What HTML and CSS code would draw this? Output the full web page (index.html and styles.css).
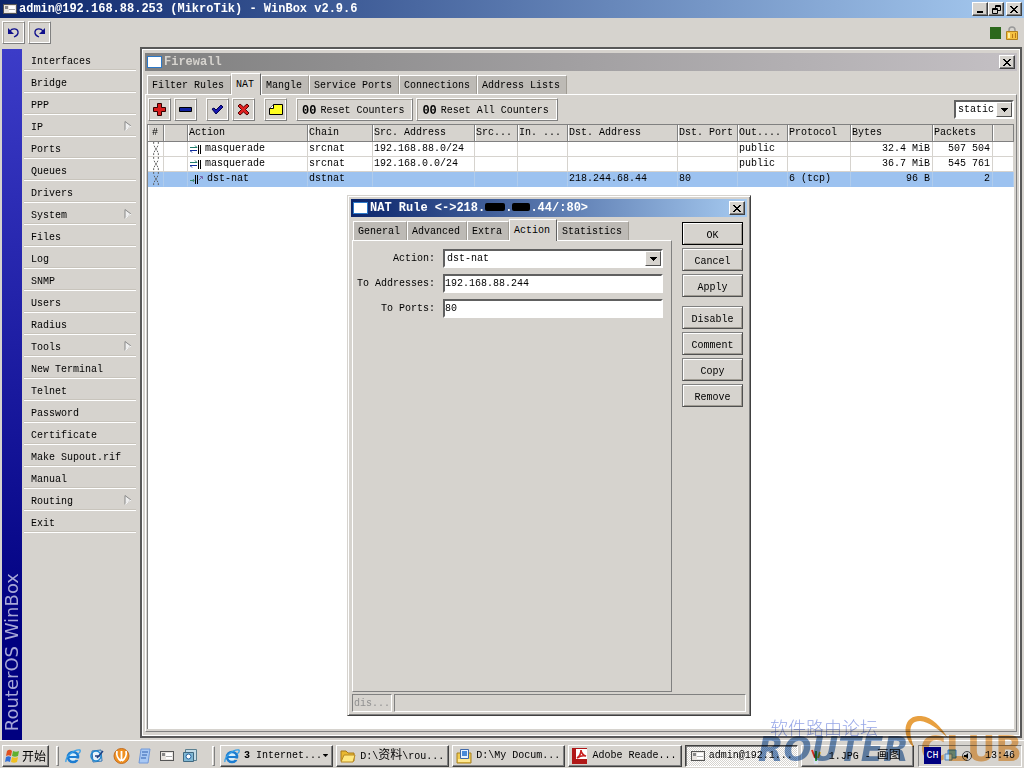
FILE: index.html
```html
<!DOCTYPE html>
<html lang="en">
<head>
<meta charset="utf-8">
<title>admin@192.168.88.253 (MikroTik) - WinBox v2.9.6</title>
<link rel="stylesheet" href="styles.css">
</head>
<body>
<svg class="defs" aria-hidden="true">
  <symbol id="close" viewBox="0 0 8 7"><path d="M0 0h2v1h1v1h2v-1h1v-1h2v1h-1v1h-1v1h-1v1h1v1h1v1h1v1h-2v-1h-1v-1h-2v1h-1v1h-2v-1h1v-1h1v-1h1v-1h-1v-1h-1v-1h-1z"/></symbol>
  <symbol id="down" viewBox="0 0 7 4"><path d="M0 0h7v1h-1v1h-1v1h-1v1h-1v-1h-1v-1h-1v-1h-1z"/></symbol>
  <symbol id="app" viewBox="0 0 14 10"><path fill="#555" d="M0 0h14v10H0z"/><path fill="#e8e4e0" d="M1 1h12v8H1z"/><path fill="#888" d="M2 2h3v3H2z"/><path fill="#fff" d="M6 2h6v6H6z"/><path fill="#aaa" d="M6 5h6v1H6z"/></symbol>
  <symbol id="win" viewBox="0 0 15 12"><path fill="#2b78c8" d="M0 0h15v12H0z"/><path fill="#fff" d="M1 1h13v10H1z"/></symbol>
  <symbol id="sub" viewBox="0 0 8 10"><path fill="#eee" stroke="#888" d="M1 .5v9L7 5z"/><path stroke="#fff" fill="none" d="M1 9.5L7 5"/></symbol>
  <symbol id="off" viewBox="0 0 8 15"><path fill="none" stroke="#555" d="M1.500 0v3M6.500 0v3M1.500 12v3M6.500 12v3M2 4l1 2 2 3 1 2M6 4l-1 2-2 3-1 2" stroke-dasharray="2 1"/></symbol>
  <symbol id="masq" viewBox="0 0 12 10"><path stroke="#207c6c" fill="none" d="M0 3.500h7M5 1.500l2 2"/><path stroke="#102c9c" fill="none" d="M0 6.500h7M2 8.500l-2-2"/><path d="M8 1h1v9H8zM10 1h1v9h-1z"/></symbol>
  <symbol id="dst" viewBox="0 0 14 10"><path stroke="#3c8c6c" fill="none" d="M0 6.500h4M3 5l1 1.500L3 8"/><path d="M5 1h1v9H5zM7 1h1v9H7z"/><path stroke="#76a" fill="none" d="M9 6l3-3M10 2.500h2.500V5"/></symbol>
  <symbol id="ie" viewBox="0 0 16 16"><circle cx="8" cy="9" r="5" fill="#d8f0fc" stroke="#1c7cd0" stroke-width="2.600"/><path fill="#1c7cd0" d="M4 8h9v2H4z"/><path fill="#d4d0c8" d="M10 10.500h5v1.500h-5z"/><path d="M1 14C0 9 9 1 15 2c1 2-2 4-2 4" fill="none" stroke="#36a0e8" stroke-width="1.300"/></symbol>
</svg>
<div class="screen">
  <header class="title active">
    <svg class="ic14"><use href="#app"/></svg>
    <h1>admin@192.168.88.253 (MikroTik) - WinBox v2.9.6</h1>
    <div class="winbtns">
      <button class="cap" aria-label="Minimize"><svg width="8" height="7"><path d="M1 5h6v2H1z"/></svg></button>
      <button class="cap" aria-label="Restore"><svg width="9" height="9"><path fill="none" stroke="#000" d="M3.500 3V.5h5v5H6M3 1.500h6M.5 3.500h5v5h-5zM0 4.500h6"/></svg></button>
      <button class="cap gap" aria-label="Close"><svg width="8" height="7"><use href="#close"/></svg></button>
    </div>
  </header>
  <div class="mainbar">
    <button class="tool" aria-label="Undo"><svg width="13" height="11" viewBox="0 0 13 11"><path fill="none" stroke="#10108c" stroke-width="1.300" d="M3 4C5 1 10 1 11 4.500c.5 3-1.500 4.500-4 5.500"/><path fill="#10108c" d="M1 1v6h6z"/></svg></button>
    <button class="tool" aria-label="Redo"><svg width="13" height="11" viewBox="0 0 13 11"><path fill="none" stroke="#10108c" stroke-width="1.300" d="M10 4C8 1 3 1 2 4.500c-.5 3 1.500 4.500 4 5.500"/><path fill="#10108c" d="M12 1v6H6z"/></svg></button>
    <div class="status">
      <span class="led"></span>
      <svg width="12" height="14" viewBox="0 0 12 14"><path fill="none" stroke="#999" stroke-width="1.500" d="M3 6V4c0-4 6-4 6 0v2"/><path fill="#f4c040" stroke="#b08020" d="M.5 5.500h11v8H.5z"/><path fill="#fff0a0" d="M2 7h2v5H2z"/><path fill="#b87818" d="M6 8h1v4H6zM9 7h1v5H9z"/></svg>
    </div>
  </div>
  <div class="work">
    <aside class="brand"><span>RouterOS WinBox</span></aside>
    <nav class="menu">
      <button>Interfaces</button><button>Bridge</button><button>PPP</button>
      <button>IP<svg class="arrow"><use href="#sub"/></svg></button>
      <button>Ports</button><button>Queues</button><button>Drivers</button>
      <button>System<svg class="arrow"><use href="#sub"/></svg></button>
      <button>Files</button><button>Log</button><button>SNMP</button><button>Users</button><button>Radius</button>
      <button>Tools<svg class="arrow"><use href="#sub"/></svg></button>
      <button>New Terminal</button><button>Telnet</button><button>Password</button><button>Certificate</button>
      <button>Make Supout.rif</button><button>Manual</button>
      <button>Routing<svg class="arrow"><use href="#sub"/></svg></button>
      <button>Exit</button>
    </nav>
    <main class="desktop">
      <section class="firewall">
        <div class="title">
          <svg class="ic15"><use href="#win"/></svg><h2>Firewall</h2>
          <div class="winbtns"><button class="cap" aria-label="Close"><svg width="8" height="7"><use href="#close"/></svg></button></div>
        </div>
        <div class="tabs">
          <button>Filter Rules</button><button class="on">NAT</button><button>Mangle</button><button>Service Ports</button><button>Connections</button><button>Address Lists</button>
        </div>
        <div class="pane">
          <div class="actions">
            <button class="tool" aria-label="Add"><svg width="13" height="13"><path fill="#d81c1c" stroke="#300" d="M4.500.5h4v4h4v4h-4v4h-4v-4h-4v-4h4z"/></svg></button>
            <button class="tool" aria-label="Remove"><svg width="13" height="13"><path fill="#1020a0" stroke="#000" d="M.5 4.500h12v4H.5z"/></svg></button>
            <button class="tool gap" aria-label="Enable"><svg width="13" height="13"><path fill="#1818b0" stroke="#000050" d="M1 6l2-1 2 2 5-5 2 2-7 7z"/></svg></button>
            <button class="tool" aria-label="Disable"><svg width="13" height="13"><path fill="#e02020" stroke="#500" d="M1 3l2-2 3.500 3L10 1l2 2-3.500 3.500L12 10l-2 2-3.500-3L3 12l-2-2 3.500-3.500z"/></svg></button>
            <button class="tool gap" aria-label="Comment"><svg width="14" height="12"><path fill="#ffff20" stroke="#000" d="M.5 10.500v-6l4-4h9v10z"/><path fill="#fff" stroke="#000" d="M.5 4.500h4v-4"/></svg></button>
            <button class="tool wide gap"><b>00</b>Reset Counters</button>
            <button class="tool wide"><b>00</b>Reset All Counters</button>
            <span class="combo filter"><select aria-label="Filter"><option>static</option></select><i><svg width="7" height="4"><use href="#down"/></svg></i></span>
          </div>
          <div class="grid">
            <table>
              <colgroup><col class="c-num"><col class="c-flag"><col class="c-act"><col class="c-chain"><col class="c-src"><col class="c-sp"><col class="c-in"><col class="c-dst"><col class="c-dp"><col class="c-in"><col class="c-prot"><col class="c-bytes"><col class="c-dp"><col></colgroup>
              <thead><tr><th>#</th><th></th><th>Action</th><th>Chain</th><th>Src. Address</th><th>Src...</th><th>In. ...</th><th>Dst. Address</th><th>Dst. Port</th><th>Out....</th><th>Protocol</th><th>Bytes</th><th>Packets</th><th></th></tr></thead>
              <tbody>
                <tr><td><svg class="off"><use href="#off"/></svg></td><td></td><td><span class="act"><svg class="ic12"><use href="#masq"/></svg>masquerade</span></td><td>srcnat</td><td>192.168.88.0/24</td><td></td><td></td><td></td><td></td><td>public</td><td></td><td class="r">32.4 MiB</td><td class="r">507 504</td><td></td></tr>
                <tr><td><svg class="off"><use href="#off"/></svg></td><td></td><td><span class="act"><svg class="ic12"><use href="#masq"/></svg>masquerade</span></td><td>srcnat</td><td>192.168.0.0/24</td><td></td><td></td><td></td><td></td><td>public</td><td></td><td class="r">36.7 MiB</td><td class="r">545 761</td><td></td></tr>
                <tr class="sel"><td><svg class="off"><use href="#off"/></svg></td><td></td><td><span class="act"><svg class="ic14"><use href="#dst"/></svg>dst-nat</span></td><td>dstnat</td><td></td><td></td><td></td><td>218.244.68.44</td><td>80</td><td></td><td>6 (tcp)</td><td class="r">96 B</td><td class="r">2</td><td></td></tr>
              </tbody>
            </table>
          </div>
        </div>
      </section>
    </main>
  </div>
  <footer class="taskbar">
    <button class="task start"><svg width="16" height="16" viewBox="0 0 16 16"><path fill="#e05020" d="M2 3c2-2 4-1 5 0L6 8C4 7 3 7 1 8z"/><path fill="#60b030" d="M8 3c2 1 4 1 6 0l-1 5c-2 1-4 1-6 0z"/><path fill="#3070d8" d="M1 9c2-1 3-1 5 0l-1 5c-2-1-3-1-5 0z"/><path fill="#f0c020" d="M7 9c2 1 4 1 6 0l-1 5c-2 1-4 1-6 0z"/></svg><span class="cjk">开始</span></button>
    <span class="grip"></span>
    <div class="quick">
      <svg width="16" height="16"><use href="#ie"/></svg>
      <svg width="16" height="16" viewBox="0 0 16 16"><path fill="#e8f4fc" stroke="#3070b0" d="M3 3l9-1 1 11-9 1z"/><circle cx="7" cy="8" r="5" fill="none" stroke="#2088d0" stroke-width="1.500"/><path fill="none" stroke="#204080" stroke-width="1.500" d="M6 8h5M8 10l6-7"/></svg>
      <svg width="17" height="16" viewBox="0 0 17 16"><circle cx="8.500" cy="8" r="7.500" fill="#f09020" stroke="#c06c20"/><path fill="none" stroke="#fff" stroke-width="1.800" d="M4 3c-1 4 1 8 4 10M8.500 3v10M13 3c1 4-1 8-4 10"/></svg>
      <svg width="14" height="16" viewBox="0 0 14 16"><path fill="#a8c8f4" stroke="#7098d8" d="M3 1h9l-2 14H1z"/><path stroke="#3060b0" d="M4 4h6M4 7h5M3 10h5"/></svg>
      <svg class="ic14"><use href="#app"/></svg>
      <svg width="16" height="16" viewBox="0 0 16 16"><path fill="#c4dce8" stroke="#5c8090" d="M3.500 1.500h11v11h-11z"/><path fill="#80b8d4" stroke="#406880" d="M1.500 4.500h10v9h-10z"/><circle cx="6.500" cy="8.500" r="2.500" fill="#fff" stroke="#2060a0"/></svg>
    </div>
    <span class="grip"></span>
    <div class="tasks">
      <button class="task"><svg width="16" height="16"><use href="#ie"/></svg><span><b>3</b> Internet...</span><svg class="more" width="5" height="3"><use href="#down"/></svg></button>
      <button class="task"><svg width="16" height="14" viewBox="0 0 16 14"><path fill="#e8b830" stroke="#a87818" d="M1 12V2h5l2 2h6v8z"/><path fill="#ffe880" stroke="#b88820" d="M1 13l3-7h11l-2 7z"/></svg><span>D:\<span class="cjk">资料</span>\rou...</span></button>
      <button class="task"><svg width="16" height="16" viewBox="0 0 16 16"><path fill="#f0cc50" stroke="#a88020" d="M1 5h14v10H1z"/><path fill="#e8f0ff" stroke="#4068a8" d="M4.500 1.500h8v9h-8z"/><path fill="#4888d8" d="M6 3h5v5H6z"/><path fill="#ffe890" d="M2 11h12v3H2z"/></svg><span>D:\My Docum...</span></button>
      <button class="task"><svg width="16" height="16" viewBox="0 0 16 16"><path fill="#b01818" d="M0 0h15v16H0z"/><path fill="#fff" d="M4 1h11v10H4z"/><path fill="none" stroke="#c82020" stroke-width="1.600" d="M5 10c3-2 4-6 4-8 0 3 3 6 5 6-3-1-6 0-9 2"/></svg><span>Adobe Reade...</span></button>
      <button class="task pressed"><svg class="ic14"><use href="#app"/></svg><span>admin@192.1...</span></button>
      <button class="task"><svg width="20" height="16" viewBox="0 0 20 16"><path fill="#d8e0f0" d="M8 7h6l-1 9H9z"/><path stroke="#d83020" stroke-width="2" d="M10 10L7 2"/><path stroke="#309838" stroke-width="2" d="M11 13V3"/><path stroke="#d8a820" stroke-width="2" d="M13 10l2-6"/></svg><span>1.JPG - <span class="cjk">画图</span></span></button>
    </div>
    <div class="tray"><span class="lang">CH</span>
      <svg width="14" height="14" viewBox="0 0 14 14"><path fill="#6cb0e8" stroke="#3070b8" d="M4 1h8v8H4z"/><path fill="#b8dcf8" stroke="#5080b8" d="M1 5h7v6H1z"/></svg>
      <svg width="12" height="12" viewBox="0 0 12 12"><circle cx="6" cy="6" r="4.500" fill="#ccc" stroke="#444"/><path d="M3 5h2l2-2v6L5 7H3z"/></svg>
      <time>13:46</time></div>
  </footer>

  <section class="dialog">
    <div class="title active">
      <svg class="ic15"><use href="#win"/></svg><h2>NAT Rule &lt;-&gt;218.<i class="mask"></i>.<i class="mask short"></i>.44/:80&gt;</h2>
      <div class="winbtns"><button class="cap" aria-label="Close"><svg width="8" height="7"><use href="#close"/></svg></button></div>
    </div>
    <div class="dbody">
      <div class="dleft">
        <div class="tabs"><button>General</button><button>Advanced</button><button>Extra</button><button class="on">Action</button><button>Statistics</button></div>
        <form class="form">
          <label for="act">Action:</label><span class="combo"><select id="act"><option>dst-nat</option></select><i><svg width="7" height="4"><use href="#down"/></svg></i></span>
          <label for="addr">To Addresses:</label><input id="addr" value="192.168.88.244">
          <label for="port">To Ports:</label><input id="port" value="80">
        </form>
      </div>
      <div class="dbtns">
        <button class="push default">OK</button><button class="push">Cancel</button><button class="push">Apply</button>
        <button class="push second">Disable</button><button class="push">Comment</button><button class="push">Copy</button><button class="push">Remove</button>
      </div>
    </div>
    <div class="dstatus"><span>dis...</span><span></span></div>
  </section>

  <div class="watermark">
    <span class="forum">软件路由论坛</span>
    <span class="logo"><em>ROUTER</em><strong>CLUB</strong></span>
    <svg class="swoosh" width="46" height="32" viewBox="0 0 46 32"><path fill="#e8a040" d="M9 31C-3 18 0 1 14 0c13-1 22 10 30 22C33 12 25 6 16 5 5 5 4 16 10 31z"/></svg>
  </div>
</div>
</body>
</html>
```

FILE: styles.css
```css
* { box-sizing: border-box; }
body {
  margin: 0;
  background: #d6d3ce;
  color: #000;
  font: 10px/12px "Liberation Mono", "Noto Sans CJK SC", monospace;
}
button, input, select { font: inherit; color: inherit; margin: 0; border-radius: 0; }
button { background: #d6d3ce; padding: 0; border: 0; white-space: pre; }
svg { flex: none; display: block; }
.defs { position: absolute; width: 0; height: 0; }
.ic12 { width: 12px; height: 10px; }
.ic14 { width: 14px; height: 10px; }
.ic15 { width: 15px; height: 12px; }
.cjk { font: 12px/12px "Noto Sans CJK SC", sans-serif; }

.screen { position: relative; display: flex; flex-direction: column; min-height: 100vh; overflow: hidden; }

/* Title bars */
.title {
  display: flex; align-items: center; gap: 2px; height: 18px; padding: 0 2px;
  background: linear-gradient(90deg, #808080, #c4c0c4); color: #d6d3ce;
}
.title.active { background: linear-gradient(90deg, #0a246a, #a6caf0); color: #fff; }
.title h1, .title h2 { margin: 0; font: bold 12px/16px "Liberation Mono", monospace; white-space: pre; }
header.title { padding: 0 2px 0 3px; }
.winbtns { display: flex; margin-left: auto; }
.cap {
  display: flex; align-items: center; justify-content: center; width: 16px; height: 14px;
  border: 1px solid; border-color: #fff #404040 #404040 #fff; box-shadow: inset -1px -1px #808080;
}
.cap.gap { margin-left: 2px; }
.mask { display: inline-block; width: 20px; height: 8px; background: #000; border-radius: 2px; }
.mask.short { width: 18px; }

/* Main toolbar */
.mainbar { display: flex; align-items: center; gap: 3px; height: 29px; padding: 0 6px 0 2px; }
.tool {
  display: flex; align-items: center; justify-content: center; width: 23px; height: 23px;
  border: 1px solid; border-color: #fff #808080 #808080 #fff; box-shadow: inset 1px 1px #a8a49c, inset -1px -1px #fff;
}
.status { display: flex; align-items: center; gap: 5px; margin-left: auto; }
.led { width: 11px; height: 12px; background: #2c681c; }

/* Work area */
.work { flex: 1; display: flex; padding: 0 2px; }
.brand {
  width: 20px; margin: 2px 0 0; display: flex; align-items: flex-end; justify-content: center; padding-bottom: 9px;
  background: linear-gradient(#3c3cc8, #000080 85%); color: #a8a8d8;
}
.brand span { writing-mode: vertical-rl; transform: rotate(180deg); font: 18px/20px "DejaVu Sans", sans-serif; white-space: nowrap; }
.menu { width: 118px; padding: 2px 4px 0 2px; display: flex; flex-direction: column; }
.menu button {
  display: flex; align-items: center; justify-content: space-between; height: 22px; padding: 4px 4px 0 7px;
  text-align: left; border-bottom: 1px solid #fff; box-shadow: inset 0 -1px #c8c4bc;
}
.arrow { width: 8px; height: 10px; margin-bottom: 4px; }
.desktop { flex: 1; min-width: 0; display: flex; margin-bottom: 2px; border: 2px solid #585858; }
.firewall { flex: 1; min-width: 0; display: flex; flex-direction: column; padding: 3px 2px 3px; border: 1px solid #fff; }
.firewall > .title { margin-bottom: 2px; }
.tabs { display: flex; align-items: flex-end; padding: 0 2px; }
.tabs button {
  height: 19px; padding: 2px 6px 0 4px; background: #bdbab5;
  border: 1px solid; border-color: #fff #a09c94 transparent #fff; border-bottom: 0;
}
.tabs .on { height: 22px; margin-bottom: -1px; padding-bottom: 2px; background: #d6d3ce; border-right-color: #606060; z-index: 1; }
.pane { flex: 1; display: flex; flex-direction: column; padding: 3px 2px 2px 1px; border: 1px solid; border-color: #fff #808080 #808080 #fff; }
.actions { display: flex; align-items: center; gap: 3px; height: 23px; margin: 0 0 3px 1px; }
.actions .gap { margin-left: 6px; }
.tool.wide { width: auto; gap: 4px; padding: 3px 8px 0 5px; }
.tool.wide b { font-size: 12px; }

/* Drop-downs and text boxes */
.combo { display: flex; height: 19px; background: #fff; border: 2px solid; border-color: #606060 #fff #fff #606060; }
.combo select { flex: 1; min-width: 0; appearance: none; border: 0; background: #fff; padding: 0 0 0 2px; }
.combo i {
  width: 16px; display: flex; align-items: center; justify-content: center; background: #d6d3ce;
  border: 1px solid; border-color: #fff #505050 #505050 #fff;
}
.filter { width: 60px; margin: 0 0 0 auto; }

/* Rule list */
.grid { flex: 1; background: #fff; border-top: 1px solid #808080; border-left: 1px solid #808080; }
table { width: 100%; table-layout: fixed; border-collapse: separate; border-spacing: 0; }
th, td { padding: 0 2px 0 1px; text-align: left; font-weight: normal; white-space: nowrap; overflow: hidden; }
th { height: 17px; background: #d6d3ce; border-right: 1px solid #808080; border-bottom: 1px solid #808080; box-shadow: inset 1px 0 #fff; }
td { height: 15px; line-height: 14px; border-right: 1px solid #d6d3ce; border-bottom: 1px solid #d6d3ce; }
th:first-child { padding-left: 4px; }
td:first-child { padding-left: 4px; }
.sel td { background: #9cc2f0; border-color: #9cc2f0 #b0ccec #9cc2f0; }
td.r { text-align: right; }
.act { display: flex; align-items: center; gap: 3px; padding-left: 1px; }
.off { width: 8px; height: 14px; }
.c-num { width: 16px; } .c-flag { width: 24px; } .c-act { width: 120px; } .c-chain { width: 65px; }
.c-src { width: 102px; } .c-sp { width: 43px; } .c-in { width: 50px; } .c-dst { width: 110px; }
.c-dp { width: 60px; } .c-prot { width: 63px; } .c-bytes { width: 82px; }

/* NAT rule window */
.dialog {
  position: absolute; left: 347px; top: 195px; width: 404px; height: 521px;
  display: flex; flex-direction: column; padding: 3px; background: #d6d3ce;
  border: 1px solid; border-color: #d6d3ce #404040 #404040 #d6d3ce; box-shadow: inset 1px 1px #fff, inset -1px -1px #808080;
}
.dbody { flex: 1; display: flex; gap: 10px; padding: 2px 4px 0 1px; }
.dleft { flex: 1; display: flex; flex-direction: column; }
.dleft .tabs { padding: 0 1px; }
.form {
  flex: 1; display: grid; grid-template-columns: 82px 1fr; grid-auto-rows: 19px; gap: 6px 8px; align-content: start;
  padding: 8px 8px 0 0; border: 1px solid; border-color: #fff #808080 #808080 #fff;
}
.form label { text-align: right; line-height: 19px; white-space: nowrap; }
.form input {
  min-width: 0; width: 100%; height: 19px; padding: 0; background: #fff;
  border: 2px solid; border-color: #606060 #fff #fff #606060; outline: 0;
}
.dbtns { width: 61px; display: flex; flex-direction: column; gap: 3px; padding-top: 3px; }
.push {
  height: 23px; padding-top: 4px;
  border: 1px solid; border-color: #808080 #505050 #505050 #808080; box-shadow: inset 1px 1px #fff, inset -1px -1px #a09c94;
}
.push.default { border-color: #000; }
.push.second { margin-top: 6px; }
.dstatus { display: flex; gap: 2px; height: 18px; margin: 2px 1px 0; color: #909090; }
.dstatus span { flex: 1; padding: 3px 1px 0; border: 1px solid; border-color: #808080 #fff #fff #808080; }
.dstatus span:first-child { flex: 0 0 40px; }

/* Taskbar */
.taskbar { display: flex; align-items: center; height: 28px; padding: 2px 2px 0; border-top: 1px solid #fff; }
.task {
  display: flex; align-items: center; height: 22px; padding: 0 4px 0 3px; overflow: hidden;
  border: 1px solid; border-color: #fff #404040 #404040 #fff; box-shadow: inset -1px -1px #808080;
}
.task svg { margin-right: 4px; }
.task .more { margin: 0 0 0 auto; }
.task.start { width: 47px; padding: 0 2px; }
.task.start svg { margin-right: 1px; }
.task.pressed {
  padding-left: 5px; border-color: #404040 #fff #fff #404040; box-shadow: inset 1px 1px #808080;
  background: repeating-conic-gradient(#fff 0 25%, #d6d3ce 0 50%) 0 0 / 2px 2px;
}
.grip { width: 3px; height: 20px; margin: 0 5px 0 7px; border: 1px solid; border-color: #fff #808080 #808080 #fff; }
.quick { display: flex; align-items: center; gap: 8px; width: 141px; padding-left: 1px; }
.tasks { flex: 1; min-width: 0; display: grid; grid-template-columns: repeat(6, 1fr); gap: 3px; }
.tray {
  display: flex; align-items: center; gap: 3px; width: 104px; height: 22px; margin-left: 4px; padding: 0 6px 0 5px;
  border: 1px solid; border-color: #808080 #fff #fff #808080;
}
.lang { position: relative; z-index: 2; width: 17px; background: #000080; color: #fff; text-align: center; line-height: 17px; }
.tray time { margin-left: auto; }

/* Site mark */
.watermark { position: absolute; right: 2px; bottom: 0; width: 264px; height: 54px; pointer-events: none; mix-blend-mode: multiply; }
.forum { position: absolute; left: 12px; top: 1px; font: 300 18px/24px "Noto Sans CJK SC", sans-serif; color: #98a8e8; white-space: nowrap; }
.logo { position: absolute; left: 0; right: 0; bottom: 0; display: flex; justify-content: space-between; align-items: baseline; font: bold 33px/36px "DejaVu Sans", sans-serif; opacity: .8; }
.logo em { color: #4c78b4; }
.logo strong { color: #f0a850; font-size: 35px; }
.swoosh { position: absolute; left: 146px; top: 2px; }
```
